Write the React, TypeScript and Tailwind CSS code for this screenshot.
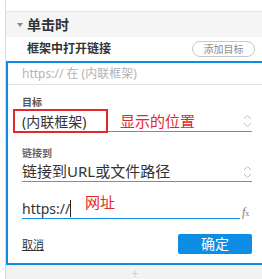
import React from "react";

const Chevrons = () => (
  <svg width="9" height="14" viewBox="0 0 9 14" fill="none" stroke="#bdbdbd" strokeWidth="1">
    <path d="M1 5 L4.5 1.5 L8 5" />
    <path d="M1 9 L4.5 12.5 L8 9" />
  </svg>
);

export default function App() {
  return (
    <div
      className="w-[262px] h-[279px] overflow-hidden bg-white text-[#333]"
      style={{ fontFamily: '"Noto Sans", "Noto Sans CJK SC", sans-serif' }}
    >
      <div className="ml-[5px] h-full flex flex-col border-l border-[#dcdcdc]">
        <div className="h-[12px] shrink-0 border-b border-[#e4e4e4]" />
        {/* section header */}
        <div className="h-[25px] shrink-0 bg-[#f5f5f5] flex items-center pl-[11px]">
          <svg width="6" height="4" viewBox="0 0 6 4" className="mr-[4px]">
            <path d="M0 0 L6 0 L3 4 Z" fill="#8a8a8a" />
          </svg>
          <span className="text-[14px] font-bold leading-none text-[#333]">单击时</span>
        </div>
        {/* action row */}
        <div className="h-[24px] shrink-0 flex items-center pl-[21px] pr-[7px]">
          <span className="text-[12px] font-bold leading-none text-[#333]">框架中打开链接</span>
          <button className="ml-auto w-[63px] h-[16px] rounded-full border border-[#c8c8c8] bg-white text-[10px] leading-none text-[#8c8c8c] flex items-center justify-center">
            添加目标
          </button>
        </div>
        {/* panel */}
        <div className="w-[262px] h-[204px] shrink-0 border-2 border-[#0d8de3] bg-white flex flex-col">
          <div className="h-[22px] shrink-0 border-b border-[#e2e2e2] flex items-center pl-[14px]">
            <span className="text-[12px] leading-none text-[#b3b3b3]">https:// 在 (内联框架)</span>
          </div>
          <div className="pl-[14px] pr-[14px] flex flex-col">
            <div className="mt-[10px] text-[10px] leading-[14px] font-bold text-[#555]">目标</div>
            <div className="relative h-[23px] flex items-end justify-between border-b border-[#8a8a8a]">
              <span className="text-[14px] leading-[19px] text-[#333]">(内联框架)</span>
              <span className="self-center mt-[2px]"><Chevrons /></span>
              <div className="absolute left-[-9px] top-0 w-[95px] h-[24px] border-2 border-[#e5262b]" />
              <span className="absolute left-[98px] top-[2px] text-[15px] leading-[20px] text-[#e5262b]">显示的位置</span>
            </div>
            <div className="mt-[14px] text-[10px] leading-[14px] font-bold text-[#666]">链接到</div>
            <div className="h-[22px] flex items-end justify-between border-b border-[#8a8a8a]">
              <span className="text-[15px] leading-[19px] text-[#333]">链接到URL或文件路径</span>
              <span className="self-center mt-[2px]"><Chevrons /></span>
            </div>
            <div className="relative mt-[14px] h-[23px] flex items-end">
              <div className="w-[218px] h-full flex items-end border-b border-[#0d8de3]">
                <span className="text-[14px] leading-[19px] text-[#333]">https://</span>
                <span className="w-px h-[17px] bg-[#222] mb-[1px]" />
              </div>
              <span
                className="ml-[2px] mb-[1px] text-[12px] leading-none italic text-[#777]"
                style={{ fontFamily: '"Liberation Serif", serif' }}
              >
                f<span className="text-[8px] not-italic">x</span>
              </span>
              <span className="absolute left-[63px] top-[-4px] text-[15px] leading-[20px] text-[#e5262b]">网址</span>
            </div>
            <div className="mt-[15px] flex items-center justify-between">
              <span className="text-[11px] leading-none underline text-[#333]">取消</span>
              <button className="w-[74px] h-[20px] rounded-[2px] bg-[#0d8de3] text-white text-[14px] leading-none flex items-center justify-center">
                确定
              </button>
            </div>
          </div>
        </div>
        <div className="flex-1 bg-[#f2f2f2] flex justify-center pt-[3px]">
          <span className="ml-[2px] text-[12px] leading-none text-[#d0d0d0]">+</span>
        </div>
      </div>
    </div>
  );
}
